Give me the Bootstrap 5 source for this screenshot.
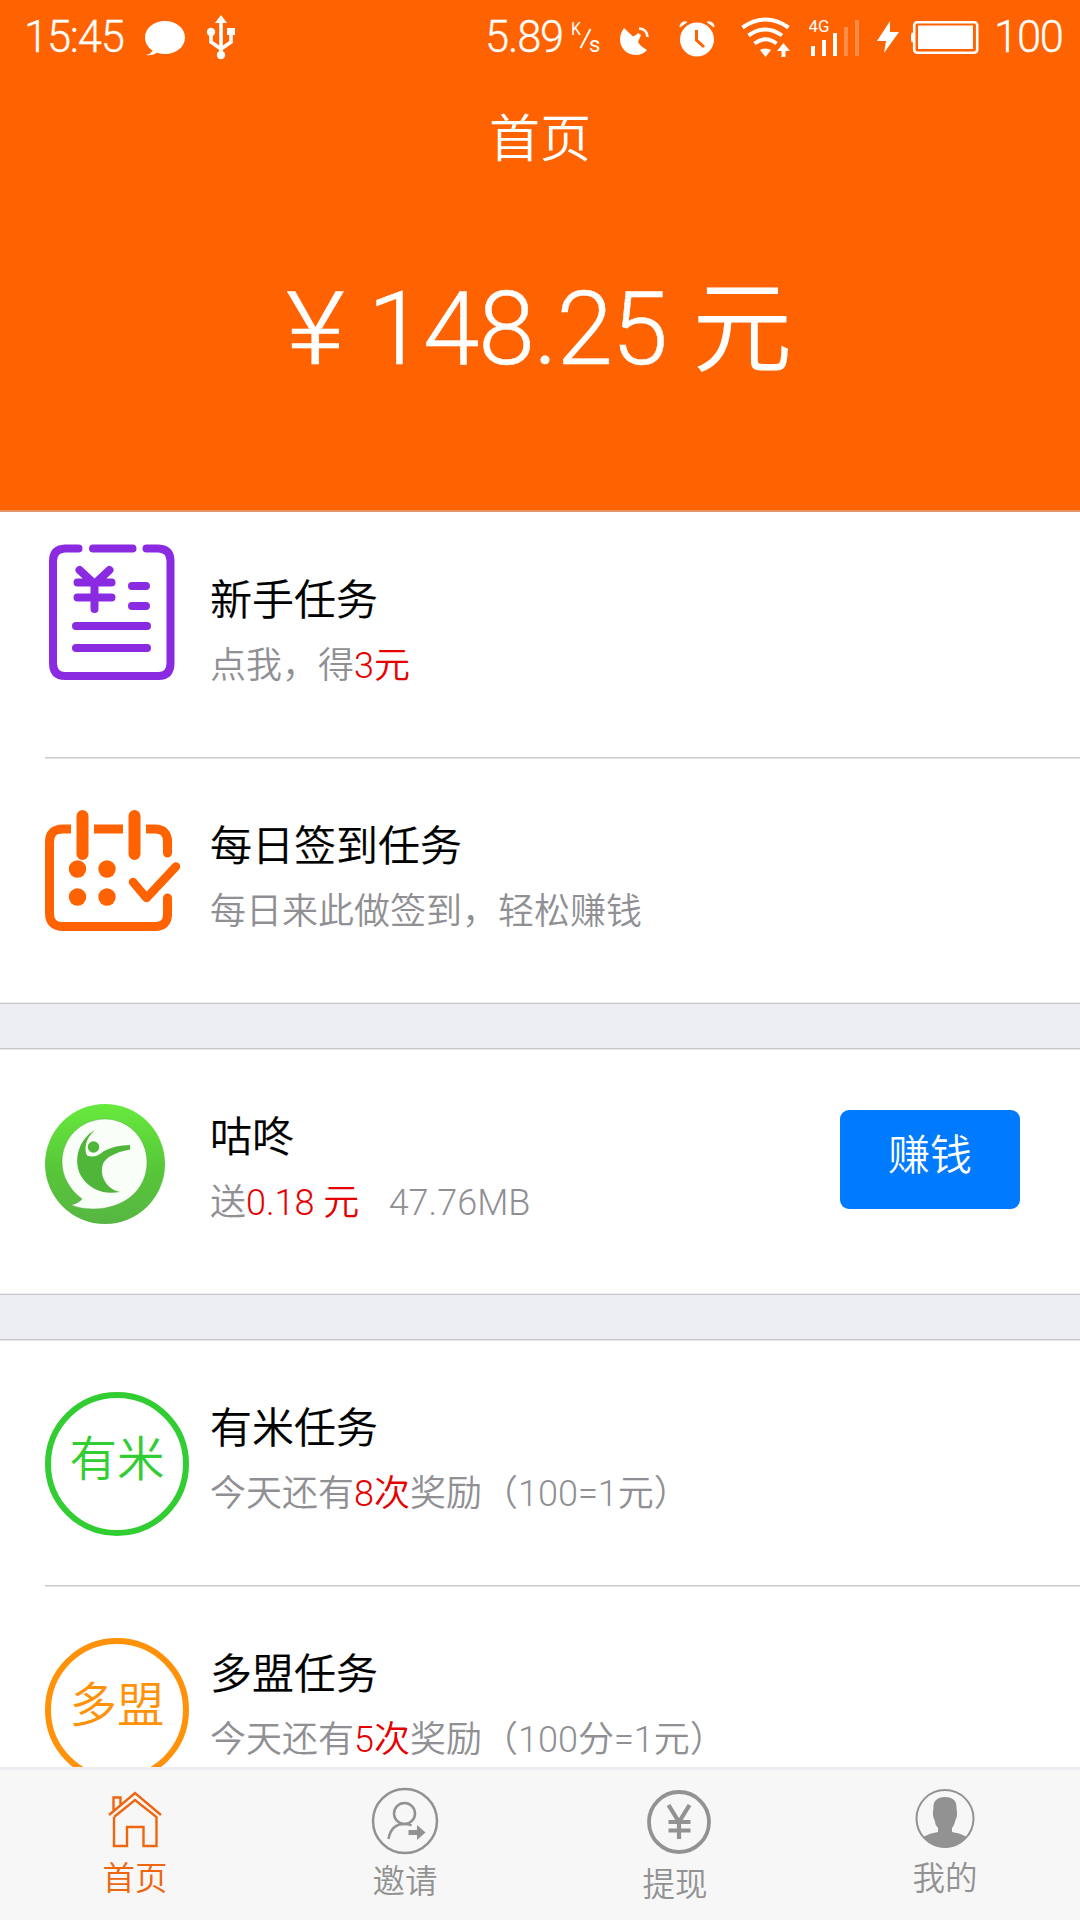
<!DOCTYPE html>
<html lang="zh-CN">
<head>
<meta charset="utf-8">
<meta name="viewport" content="width=device-width, initial-scale=1">
<title>首页</title>
<link rel="stylesheet" href="https://cdn.jsdelivr.net/npm/bootstrap@5.3.0/dist/css/bootstrap.min.css">
<style>
body{font-family:Roboto,"Noto Sans CJK SC",sans-serif;font-weight:350;background:#edeef2;color:#000;height:1920px;overflow:hidden}
svg{display:block;flex:none}
.app{height:1920px}
.hero{height:510px;background:#ff6200;color:#fff}
.hero-edge{height:2px;background:#e5946a}
.status{height:75px;padding-left:24px;font-size:43.5px;line-height:76px;letter-spacing:-1.2px;white-space:nowrap;-webkit-text-stroke:.3px}
.status svg{letter-spacing:0}
.status span{flex:none}
.st-time{width:121px}
.st-speed{width:86px;margin-left:249px}
.st-batt{width:70px}
.page-title{font-size:51px;line-height:60px;padding-top:35px}
.amount{font-size:102px;line-height:120px;padding-top:99px;white-space:pre;letter-spacing:-1.4px;-webkit-text-stroke:.5px}
.yen-sign{display:inline-block;transform:scaleX(1.12);margin-right:4px}
.unit{font-size:100px;margin-left:2px;-webkit-text-stroke:0}
.sheet{background:#fff}
.group-gap{height:46px;border-top:1px solid #c8c7cc;border-bottom:1px solid #c8c7cc;box-shadow:0 1px #e6e6e8,0 -1px #eeeeef;position:relative}
.task{height:245px;margin-left:45px}
.task.ruled{height:246px;border-bottom:1px solid #c8c7cc;box-shadow:0 1px #e6e6e8}
.thumb{width:165px;flex:none}
.task-title{font-size:42px;line-height:50px;padding-top:64px;-webkit-text-stroke:.2px}
.task-note{font-size:36px;line-height:44px;margin-top:18px;color:#8f8f94;white-space:pre}
.task-note b{color:#e60000;font-weight:inherit}
.file-size{padding-left:3px}
.btn-earn{width:180px;height:99px;margin:61px 60px 0 auto;background:#007aff;color:#fff;border:0;border-radius:9px;font-size:42px;line-height:50px;padding:0 0 7px;font-weight:350}
.ring{width:144px;height:144px;border:6px solid;border-radius:50%;margin-top:52px;font-size:47.5px;line-height:124px}
.ring-green{color:#32cd32}
.ring-orange{color:#ff9208}
.tabs{height:153px;background:#f7f7f7;border-top:3px solid #ebedf0;color:#929292;font-size:32.5px;line-height:44px}
.tabs a{color:inherit;text-decoration:none}
.tabs a.on{color:#ee660f}
</style>
</head>
<body>
<div class="app d-flex flex-column">
<header class="hero flex-shrink-0">
  <div class="status d-flex align-items-start">
    <span class="st-time">15:45</span>
    <svg width="40" height="75" fill="#fff"><path d="M20 21C9 21 0 28 0 37.500C0 43 3 47.500 7.500 50.500Q6 54 1 55Q8 56 12 52.800Q16 54 20 54C31 54 40 47 40 37.500S31 21 20 21Z"/></svg>
    <svg width="30" height="75" style="margin-left:21px" fill="#fff"><circle cx="5" cy="32" r="4.200"/><rect x="21" y="28" width="8" height="7"/><circle cx="15" cy="55" r="4.200"/><path d="M15 15L21 23H9Z"/><path d="M15 21V54M5 33V42L15 49L25 42V33" fill="none" stroke="#fff" stroke-width="3.600"/></svg>
    <span class="st-speed">5.89</span>
    <svg width="32" height="75" fill="#fff" font-family="Roboto"><text x="0" y="35" font-size="18" font-weight="400" textLength="10" lengthAdjust="spacingAndGlyphs">K</text><text x="18" y="52" font-size="22" font-weight="400">s</text><path d="M19.500 29L9.500 48" stroke="#fff" stroke-width="2"/></svg>
    <svg width="30" height="75" style="margin-left:17px" fill="#fff"><path d="M4 28L13 36.500Q16 35 18 33L21 35L18 42Q20 46 27 50C22 56 12 57 5 51C-2 44-1 35 4 28Z"/><path d="M19 28.500Q27 29 27.500 37" fill="none" stroke="#fff" stroke-width="2.500"/></svg>
    <svg width="36" height="75" style="margin-left:29px" fill="#fff"><circle cx="18" cy="39.500" r="17"/><path d="M1 27Q1 21 8 22ZM35 27Q35 21 28 22Z" stroke="#fff"/><path d="M17.500 30V40L25 47" fill="none" stroke="#ff6200" stroke-width="3"/></svg>
    <svg width="50" height="75" style="margin-left:26px" fill="none" stroke="#fff" stroke-width="4"><path d="M1.500 27.500Q24.500 11.500 47.500 27.500M7.500 35.500Q24.500 23.500 41 35.500M13.500 43.500Q24.500 35 35.500 43.500"/><path d="M19 50Q24.500 47 30 50L24.500 57Z" fill="#fff" stroke="none"/><path d="M36 51L42.500 43L49 51H44.500V57H40.500V51Z" fill="#fff" stroke="none"/></svg>
    <svg width="51" height="75" style="margin-left:18px" fill="#fff"><text x="-.5" y="32" font-size="17" font-family="Roboto" font-weight="400" textLength="21" lengthAdjust="spacingAndGlyphs">4G</text><path d="M2 46h4v10h-4zM13 40h4v16h-4zM24 33h4v23h-4z"/><path fill-opacity=".28" d="M35 27h4v29h-4zM46 20h4v36h-4z"/></svg>
    <svg width="23" height="75" style="margin-left:17px" fill="#fff"><path d="M13 21L0 41H9L7 53L22 32H13Z"/></svg>
    <svg width="68" height="75" style="margin-left:11px"><rect x="3.200" y="22.200" width="63" height="30.500" rx="3" fill="none" stroke="#fff" stroke-width="2.600"/><rect x="7" y="25.500" width="55" height="23.500" fill="#fff"/><path d="M2 33Q0 37.500 2 42" stroke="#fff" stroke-width="2.500" fill="none"/></svg>
    <span class="st-batt" style="margin-left:15px">100</span>
  </div>
  <div class="page-title text-center">首页</div>
  <div class="amount text-center"><span class="yen-sign">¥</span> 148.25 <span class="unit">元</span></div>
</header>
<div class="hero-edge flex-shrink-0"></div>

<main class="flex-grow-1 overflow-hidden" style="min-height:0">
  <section class="sheet">
    <div class="task ruled d-flex">
      <div class="thumb"><svg width="165" height="200" fill="none" stroke="#8a2be2" stroke-width="8" stroke-linecap="round" stroke-linejoin="round"><path d="M33.500 36.500H20Q8 37 8 49V151Q8 164 20 164H113.500Q125.500 164 125.500 151V49Q125.500 37 113.500 36.500H101.500M48 36.500H87.500"/><path d="M34.500 58L49.500 72L64.500 58M32.500 70.500H66.500M32.500 85.500H66.500M49.500 72V97M87 74H101M87 94H101M31 114H102M31 136H102"/></svg></div>
      <div><div class="task-title">新手任务</div><div class="task-note">点我，得<b>3元</b></div></div>
    </div>
    <div class="task d-flex">
      <div class="thumb"><svg width="165" height="200" viewBox="0 -1 165 200" fill="none" stroke="#ff6200" stroke-width="9" stroke-linecap="round" stroke-linejoin="round"><path stroke-linecap="butt" d="M26 70H18Q4.500 70 4.500 83V154Q4.500 167.500 18 167.500H110Q122.500 167.500 122.500 155M49 70H78M101 70H110Q122.500 70 122.500 83"/><path d="M122.500 81V94M122.500 155V139"/><path stroke-width="12" d="M37.500 57V95M89.500 57V95"/><path stroke-width="8.500" d="M88 123L101.500 139L131 107.500"/><g fill="#ff6200" stroke="none"><circle cx="32.500" cy="110" r="8.700"/><circle cx="62" cy="110" r="8.700"/><circle cx="32.500" cy="138" r="8.700"/><circle cx="62" cy="138" r="8.700"/></g></svg></div>
      <div><div class="task-title">每日签到任务</div><div class="task-note">每日来此做签到，轻松赚钱</div></div>
    </div>
  </section>
  <div class="group-gap"></div>
  <section class="sheet">
    <div class="task d-flex">
      <div class="thumb"><svg width="120" height="120" style="margin-top:55px"><defs><linearGradient id="g" x2="0" y2="1"><stop stop-color="#67ea3d"/><stop offset=".55" stop-color="#57c639"/><stop offset="1" stop-color="#57b643"/></linearGradient></defs><circle cx="60" cy="60" r="60" fill="url(#g)"/><path d="M60 15C83 15 102 34 102 58C102 86 79 105 48 105Q35 105 26 101Q34 99 37 95C24 85 17 72 17 58C17 34 36 15 60 15Z" fill="#f9fff8" stroke="#50a23d" stroke-opacity=".45"/><path d="M50 26C35 34 27 55 36 72C44 85 58 91 75 88C61 85 54 71 58 60Q62 50 85 45.500V41Q70 41 59 47Q50 55 42 51.500C39 45 40 35 50 26Z" fill="#50b63a"/><circle cx="48.500" cy="43" r="6.500" fill="#50b63a" stroke="#f9fff8" stroke-width="1.500"/></svg></div>
      <div><div class="task-title">咕咚</div><div class="task-note">送<b>0.18 元</b>   <span class="file-size">47.76MB</span></div></div>
      <button type="button" class="btn btn-earn">赚钱</button>
    </div>
  </section>
  <div class="group-gap"></div>
  <section class="sheet">
    <div class="task ruled d-flex">
      <div class="thumb"><div class="ring ring-green text-center">有米</div></div>
      <div><div class="task-title">有米任务</div><div class="task-note">今天还有<b>8次</b>奖励（100=1元）</div></div>
    </div>
    <div class="task d-flex">
      <div class="thumb"><div class="ring ring-orange text-center">多盟</div></div>
      <div><div class="task-title">多盟任务</div><div class="task-note">今天还有<b>5次</b>奖励（100分=1元）</div></div>
    </div>
  </section>
</main>

<nav class="tabs d-flex flex-shrink-0">
  <a href="#" class="on col-3 d-flex flex-column align-items-center"><svg width="54" height="87" viewBox="0 1 54 87" fill="none" stroke="currentColor" stroke-width="2.400"><path d="M1 46L27 24L53 46M5.500 41V28.500H12.500V36M6 48V77H19V58H35.500V77H48.500V48L27 31L6 48"/></svg><span>首页</span></a>
  <a href="#" class="col-3 d-flex flex-column align-items-center"><svg width="68" height="90" fill="none" stroke="currentColor" stroke-width="2.500"><circle cx="34" cy="51" r="32"/><circle cx="33.500" cy="43.500" r="10.500"/><path d="M17.500 69Q20 54 33.500 54Q38 54 40.500 55.500"/><path d="M37.500 60H46V55L54.500 62.500L46 70V65H37.500Z" fill="currentColor" stroke="none"/></svg><span>邀请</span></a>
  <a href="#" class="col-3 d-flex flex-column align-items-center"><svg width="66" height="93" style="margin-left:7px" fill="none" stroke="currentColor" stroke-width="3.800"><circle cx="33" cy="52" r="30"/><path d="M22.500 35L33 52L43.500 35M22.500 52H44.500M22.500 60.500H44.500M33 51V69" stroke-width="4.200"/></svg><span>提现</span></a>
  <a href="#" class="col-3 d-flex flex-column align-items-center"><svg width="60" height="87"><circle cx="30" cy="48.500" r="28.500" fill="none" stroke="currentColor" stroke-width="2"/><path fill="currentColor" d="M30 27C38 27 42 31 41.500 38Q43 46 40.500 50Q39 56 37 58V62Q45 63 52 67Q43 78 30 78T8 67Q15 63 23 62V58Q20 55 19.500 50Q17 46 18.500 38C18 31 22 27 30 27Z"/></svg><span>我的</span></a>
</nav>
</div>
<script src="https://cdn.jsdelivr.net/npm/bootstrap@5.3.0/dist/js/bootstrap.bundle.min.js"></script>
</body>
</html>
